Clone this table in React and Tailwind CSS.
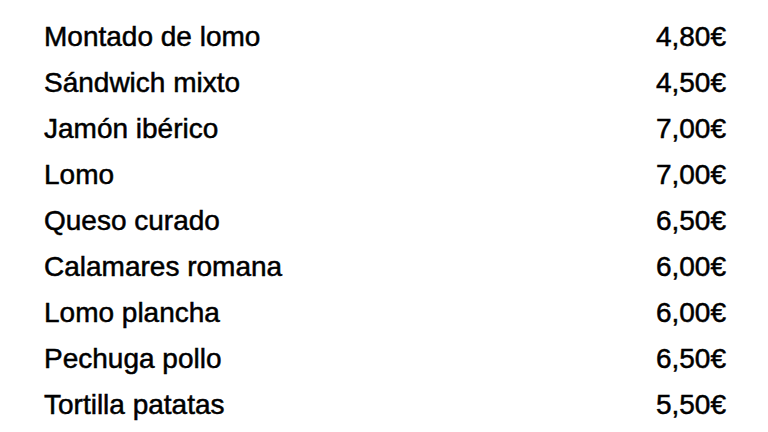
const items = [
  ["Montado de lomo", "4,80€"],
  ["Sándwich mixto", "4,50€"],
  ["Jamón ibérico", "7,00€"],
  ["Lomo", "7,00€"],
  ["Queso curado", "6,50€"],
  ["Calamares romana", "6,00€"],
  ["Lomo plancha", "6,00€"],
  ["Pechuga pollo", "6,50€"],
  ["Tortilla patatas", "5,50€"],
];

export default function App() {
  return (
    <div className="w-[768px] h-[432px] bg-white pt-[14px] pl-[44px] pr-[42px] font-['Liberation_Sans',Arial,sans-serif] text-black [-webkit-text-stroke:0.5px_black]">
      {items.map(([name, price]) => (
        <div key={name} className="flex justify-between items-center h-[46px] text-[28px]">
          <span>{name}</span>
          <span>{price}</span>
        </div>
      ))}
    </div>
  );
}
